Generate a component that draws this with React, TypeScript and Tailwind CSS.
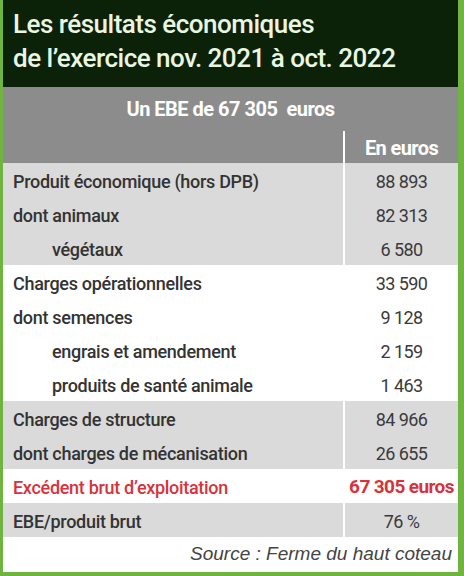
import React from 'react';

type Row = {
  label: string;
  value: string;
  indent?: boolean;
  red?: boolean;
};

const groups: { gray: boolean; rows: Row[] }[] = [
  {
    gray: true,
    rows: [
      { label: 'Produit économique (hors DPB)', value: '88 893' },
      { label: 'dont animaux', value: '82 313' },
      { label: 'végétaux', value: '6 580', indent: true },
    ],
  },
  {
    gray: false,
    rows: [
      { label: 'Charges opérationnelles', value: '33 590' },
      { label: 'dont semences', value: '9 128' },
      { label: 'engrais et amendement', value: '2 159', indent: true },
      { label: 'produits de santé animale', value: '1 463', indent: true },
    ],
  },
  {
    gray: true,
    rows: [
      { label: 'Charges de structure', value: '84 966' },
      { label: 'dont charges de mécanisation', value: '26 655' },
    ],
  },
  {
    gray: false,
    rows: [{ label: 'Excédent brut d’exploitation', value: '67 305 euros', red: true }],
  },
  {
    gray: true,
    rows: [{ label: 'EBE/produit brut', value: '76 %' }],
  },
];

const App = () => {
  return (
    <div className="w-[464px] h-[576px] bg-[#6fb43f] pl-[3px] pr-[6px] pb-[4px] font-['Roboto',sans-serif]">
      <div className="flex flex-col h-full bg-white">
        {/* Title block */}
        <div className="h-[87px] bg-[#0b2208] px-[10px] pt-[7px]">
          <h1 className="text-[26px] leading-[34px] font-medium tracking-[-0.5px] text-[#eaf6e2]">
            Les résultats économiques
            <br />
            de l’exercice nov. 2021 à oct. 2022
          </h1>
        </div>

        {/* Gray heading band */}
        <div className="bg-[#8c8c8c] h-[76px] flex flex-col">
          <div className="h-[45px] flex items-center justify-center text-white font-bold text-[20px] tracking-[-0.5px]">
            Un EBE de 67 305&nbsp; euros
          </div>
          <div className="flex flex-1">
            <div className="flex-1 border-r-2 border-white" />
            <div className="w-[113px] flex items-center justify-center pt-[2px] text-white font-bold text-[20px] tracking-[-0.6px]">
              En euros
            </div>
          </div>
        </div>

        {groups.map((g, gi) => (
          <div key={gi} className={g.gray ? 'bg-[#dadada]' : 'bg-white'}>
            {g.rows.map((r, ri) => (
              <div key={ri} className="flex h-[34px]">
                <div
                  className={`flex-1 flex items-center pt-[3px] text-[18px] font-medium tracking-[-0.3px] ${
                    r.indent ? 'pl-[49px]' : 'pl-[10px]'
                  } ${g.gray ? 'border-r-2 border-white' : ''} ${
                    r.red ? 'text-[#d8333c]' : 'text-[#333333]'
                  }`}
                >
                  {r.label}
                </div>
                <div
                  className={`w-[113px] flex items-center justify-center pt-[3px] tracking-[-0.6px] ${
                    r.red ? 'text-[#d8333c] font-bold text-[19px]' : 'text-[#3a3a3a] text-[18px]'
                  } ${g.gray ? '' : 'ml-[2px]'}`}
                >
                  {r.value}
                </div>
              </div>
            ))}
          </div>
        ))}

        {/* Source */}
        <div className="flex-1 flex items-center justify-end pr-[6px] text-[19px] italic text-[#444444] font-['Liberation_Sans',sans-serif]">
          Source : Ferme du haut coteau
        </div>
      </div>
    </div>
  );
};

export default App;
